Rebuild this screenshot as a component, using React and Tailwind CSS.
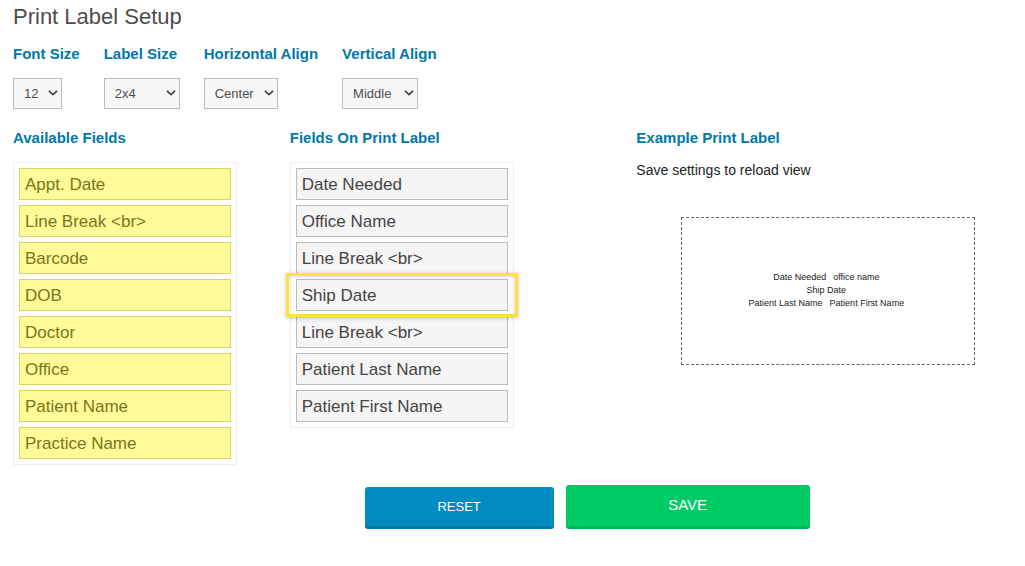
import { useState } from 'react'

const availableFields = [
  'Appt. Date',
  'Line Break <br>',
  'Barcode',
  'DOB',
  'Doctor',
  'Office',
  'Patient Name',
  'Practice Name',
]

const labelFields = [
  'Date Needed',
  'Office Name',
  'Line Break <br>',
  'Ship Date',
  'Line Break <br>',
  'Patient Last Name',
  'Patient First Name',
]

const settings = [
  { id: 'font-size', label: 'Font Size', value: '12', options: ['8', '10', '12', '14'], width: 'w-[49px]' },
  { id: 'label-size', label: 'Label Size', value: '2x4', options: ['1x3', '2x4', '4x6'], width: 'w-[76px]' },
  { id: 'h-align', label: 'Horizontal Align', value: 'Center', options: ['Left', 'Center', 'Right'], width: 'w-[74px]' },
  { id: 'v-align', label: 'Vertical Align', value: 'Middle', options: ['Top', 'Middle', 'Bottom'], width: 'w-[76px]' },
]

function SettingSelect({ id, label, value, options, width }) {
  const [selected, setSelected] = useState(value)

  return (
    <div>
      <label htmlFor={id} className="block text-[15px] leading-5 font-bold text-[#0078a8]">
        {label}
      </label>
      <div className={`relative mt-[14px] ${width}`}>
        <select
          id={id}
          value={selected}
          onChange={(e) => setSelected(e.target.value)}
          className="block h-[31px] w-full appearance-none border border-[#bbb] bg-[#f7f7f7] pl-[10px] text-[13px] text-[#4d4d4d]"
        >
          {options.map((option) => (
            <option key={option}>{option}</option>
          ))}
        </select>
        <svg
          viewBox="0 0 10 6"
          className="pointer-events-none absolute top-3 right-1 h-[6px] w-[10px]"
          fill="none"
          stroke="#444"
          strokeWidth="1.8"
        >
          <path d="M1 0.8 L5 4.6 L9 0.8" />
        </svg>
      </div>
    </div>
  )
}

function Heading({ children }) {
  return <h2 className="text-[15px] leading-5 font-bold text-[#0078a8]">{children}</h2>
}

export default function App() {
  return (
    <main className="px-[13px] pt-[5px] pb-8 font-['Liberation_Sans',Arial,sans-serif]">
      <h1 className="text-[22px] leading-6 text-[#4d4d4d]">Print Label Setup</h1>

      <div className="mt-[15px] flex gap-6">
        {settings.map((setting) => (
          <SettingSelect key={setting.id} {...setting} />
        ))}
      </div>

      <div className="mt-[19px] flex items-start">
        <section className="w-[27.7%]">
          <Heading>Available Fields</Heading>
          <ul className="mt-[14px] flex w-[224px] flex-col gap-[5px] border border-[#eee] p-[5px]">
            {availableFields.map((field) => (
              <li
                key={field}
                className="h-8 border border-[#dad55e] bg-[#fffb98] px-[5px] text-[17px] leading-8 text-[#777620]"
              >
                {field}
              </li>
            ))}
          </ul>
        </section>

        <section className="w-[34.7%]">
          <Heading>Fields On Print Label</Heading>
          <ul className="mt-[14px] flex w-[224px] flex-col gap-[5px] border border-[#eee] p-[5px]">
            {labelFields.map((field, i) => (
              <li
                key={i}
                className="relative h-8 border border-[#bbb] bg-[#f5f5f5] px-[5px] text-[17px] leading-8 text-[#444]"
              >
                {field}
                {field === 'Ship Date' && (
                  <span className="absolute -inset-x-[11px] -inset-y-[7px] z-10 border-3 border-[#ffe139] shadow-[0_1px_4px_rgba(0,0,0,0.25),inset_0_1px_3px_rgba(0,0,0,0.15)]" />
                )}
              </li>
            ))}
          </ul>
        </section>

        <section className="flex-1">
          <Heading>Example Print Label</Heading>
          <p className="mt-3 text-[14px] leading-5 text-[#222]">Save settings to reload view</p>
          <div className="mt-[37px] ml-[45px] flex h-[148px] w-[294px] flex-col items-center justify-center border border-dashed border-[#666] pr-1 pb-[2px] text-[9px] leading-[13px] text-[#222]">
            <p className="flex gap-[7px]">
              <span>Date Needed</span>
              <span>office name</span>
            </p>
            <p>Ship Date</p>
            <p className="flex gap-[7px]">
              <span>Patient Last Name</span>
              <span>Patient First Name</span>
            </p>
          </div>
        </section>
      </div>

      <div className="mt-5 ml-[35.2%] flex items-end gap-3">
        <button className="h-[42px] w-[189px] rounded-[3px] border-b-3 border-[#0078a8] bg-[#008cc1] text-[13px] text-white">
          RESET
        </button>
        <button className="h-11 w-[244px] rounded-[3px] border-b-3 border-[#00b359] bg-[#00cc66] text-[15px] text-white">
          SAVE
        </button>
      </div>
    </main>
  )
}
